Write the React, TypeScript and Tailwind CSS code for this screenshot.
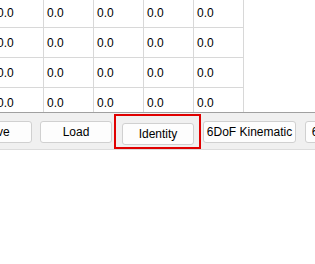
const rows = [0, 1, 2, 3]
const cols = [0, 1, 2, 3, 4]

function Btn({ label, w }: { label: string; w: string }) {
  return (
    <button
      className={`${w} h-[22px] shrink-0 rounded-[3px] border border-[#d0d0d0] bg-[#fdfdfd] text-[12px] text-black leading-none whitespace-nowrap overflow-hidden`}
    >
      {label}
    </button>
  )
}

export default function App() {
  return (
    <div className="w-[315px] h-[264px] bg-white overflow-hidden" style={{ fontFamily: '"Liberation Sans", Arial, sans-serif' }}>
      {/* table area */}
      <div className="h-[113px] overflow-hidden border-b border-[#a0a0a0]">
        <div className="-mt-[2px] -ml-[6px]">
          {rows.map((r) => (
            <div key={r} className="flex">
              {cols.map((c) => (
                <div
                  key={c}
                  className="w-[50px] h-[30px] shrink-0 border-r border-b border-[#d8d8d8] pl-[3px] flex items-center text-[12px] text-black"
                >
                  0.0
                </div>
              ))}
            </div>
          ))}
        </div>
      </div>

      {/* toolbar */}
      <div className="h-[37px] bg-[#f0f0f0] border-b border-[#dcdcdc] flex items-start -ml-[40px] pl-0 overflow-hidden">
        <div className="mt-[8px] flex">
          <Btn label="Save" w="w-[72px]" />
          <div className="w-[8px]" />
          <Btn label="Load" w="w-[72px]" />
        </div>
        <div className="ml-[2px] mt-[1px] h-[35px] border-2 border-[#e00000] pl-[6px] pr-[5px] pt-[5px]">
          <Btn label="Identity" w="w-[72px]" />
        </div>
        <div className="mt-[8px] ml-[2px] flex">
          <Btn label="6DoF Kinematic" w="w-[93px]" />
          <div className="w-[9px] shrink-0" />
          <Btn label="6DoF Dynamic" w="w-[93px]" />
        </div>
      </div>
    </div>
  )
}
